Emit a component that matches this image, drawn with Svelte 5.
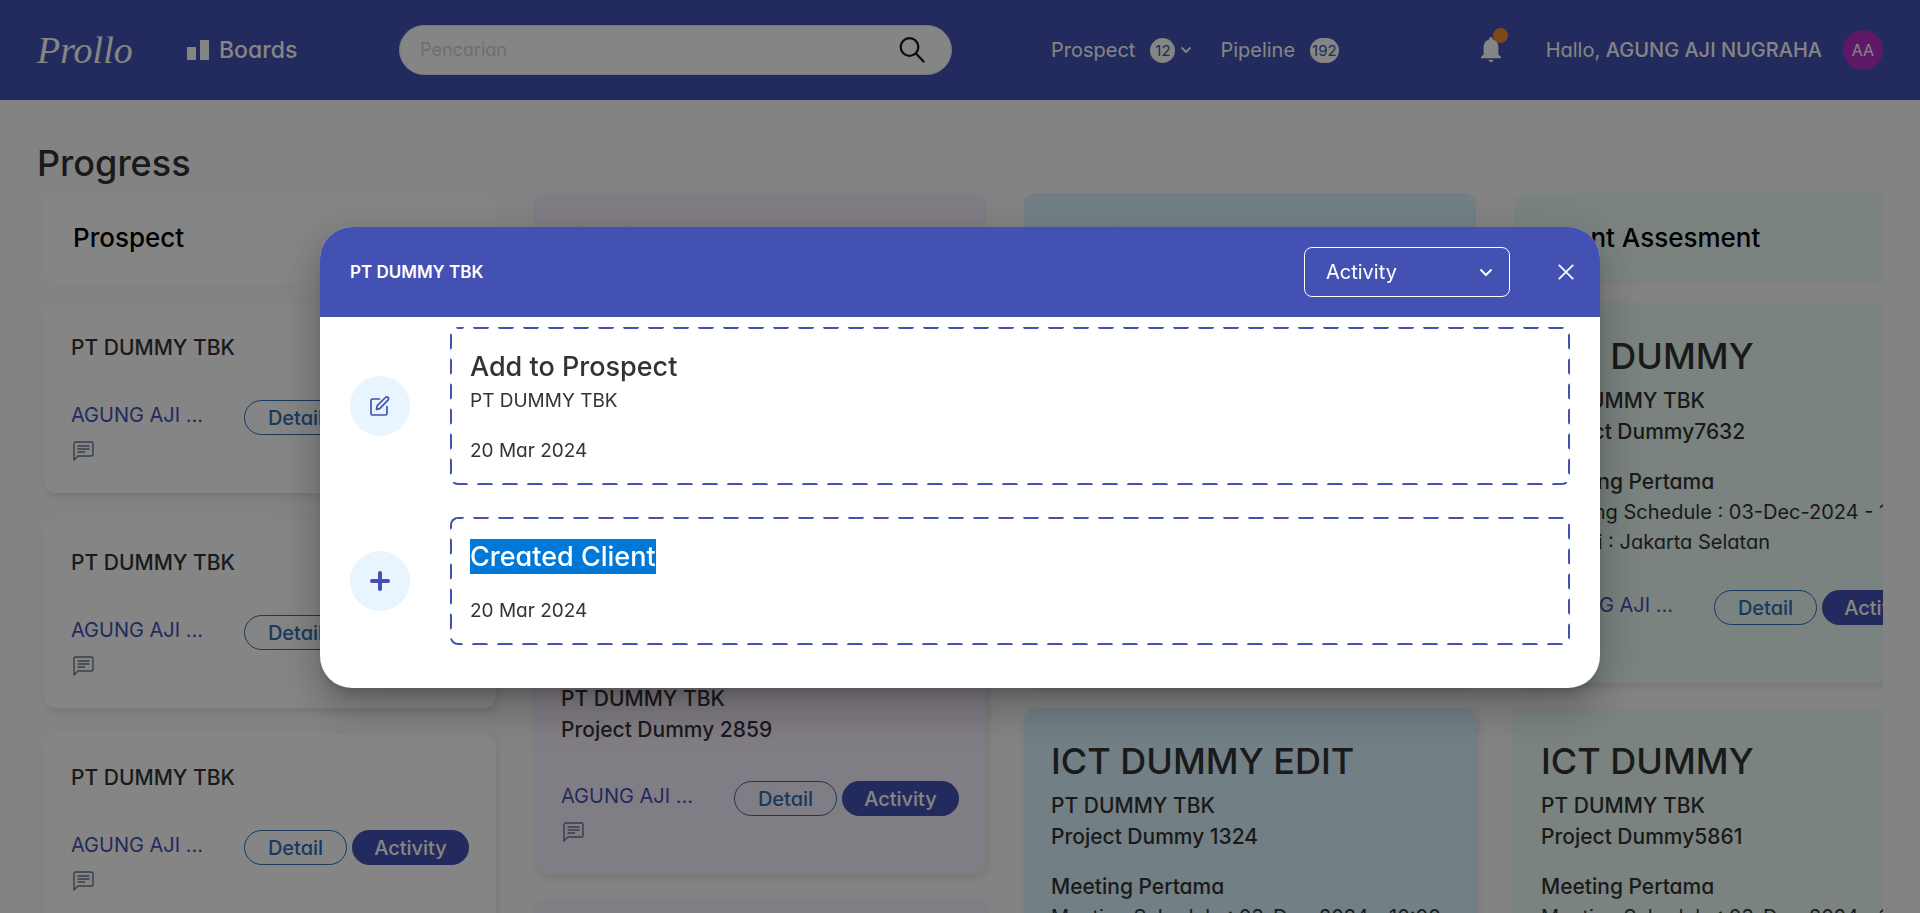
<script>
  const client = 'PT DUMMY TBK';
  const owner = 'AGUNG AJI NUGRAHA';
  const meeting = { name: 'Meeting Pertama', schedule: '03-Dec-2024 - 10:00', place: 'Jakarta Selatan' };

  const columns = [
    { name: 'Prospect', tone: 'plain', cards: [{}, {}, {}] },
    {
      name: 'Pipeline',
      tone: 'violet',
      cards: [
        { title: 'ICT DUMMY', project: 'Project Dummy 2859' },
        { title: 'ICT DUMMY', project: 'Project Dummy 2859' },
        { title: 'ICT DUMMY', project: 'Project Dummy 2859' }
      ]
    },
    {
      name: 'Meeting',
      tone: 'blue',
      cards: [
        { title: 'ICT DUMMY', project: 'Project Dummy 1324', meeting },
        { title: 'ICT DUMMY EDIT', project: 'Project Dummy 1324', meeting }
      ]
    },
    {
      name: 'Client Assesment',
      tone: 'green',
      cards: [
        { title: 'ICT DUMMY', project: 'Project Dummy7632', meeting },
        { title: 'ICT DUMMY', project: 'Project Dummy5861', meeting }
      ]
    }
  ];

  const activities = [
    { title: 'Add to Prospect', detail: client, date: '20 Mar 2024', icon: 'edit', selected: false },
    { title: 'Created Client', detail: '', date: '20 Mar 2024', icon: 'plus', selected: true }
  ];
</script>

<div class="page">
  <header class="topbar">
    <a class="logo" href="#home">Prollo</a>
    <a class="boards" href="#boards">
      <svg width="22" height="20" viewBox="0 0 22 20" aria-hidden="true">
        <rect x="0" y="7" width="9" height="13" rx="1" fill="currentColor" />
        <rect x="13" y="0" width="9" height="20" rx="1" fill="currentColor" />
      </svg>
      Boards
    </a>
    <form class="search">
      <input type="search" placeholder="Pencarian" aria-label="Pencarian" />
      <button type="button" aria-label="Cari">
        <svg width="26" height="26" viewBox="0 0 26 26" fill="none" stroke="#111820" stroke-width="2.3" stroke-linecap="round" aria-hidden="true">
          <circle cx="10.500" cy="10" r="8.800" />
          <path d="M17 16.500 24.500 24.500" />
        </svg>
      </button>
    </form>
    <nav>
      <a class="prospects" href="#prospect">
        Prospect <span class="count">12</span>
        <svg width="12" height="8" viewBox="0 0 12 8" fill="none" stroke="currentColor" stroke-width="1.800" aria-hidden="true"><path d="M1.500 1.500l4.500 4.500 4.500-4.500" /></svg>
      </a>
      <a href="#pipeline">Pipeline <span class="count">192</span></a>
    </nav>
    <div class="account">
      <button class="bell" type="button" aria-label="Notifikasi">
        <svg width="20" height="26" viewBox="0 0 20 26" fill="currentColor" aria-hidden="true">
          <path d="M10 0c-1.100 0-1.800.8-1.800 1.800v.8C4.800 3.400 2.600 6.300 2.600 10v7.500L0 20v1.200h20V20l-2.600-2.500V10c0-3.700-2.200-6.600-5.600-7.400v-.8C11.800.8 11.100 0 10 0zM7.500 22.800a2.500 2.300 0 0 0 5 0z" />
        </svg>
        <i></i>
      </button>
      <span class="hello">Hallo, <b>{owner}</b></span>
      <span class="avatar">AA</span>
    </div>
  </header>

  <main>
    <h1>Progress</h1>
    <div class="board">
      {#each columns as column}
        <section class={column.tone}>
          <h2>{column.name}</h2>
          {#each column.cards as card}
            <article>
              {#if card.title}<h3>{card.title}</h3>{/if}
              <h4>{client}</h4>
              {#if card.project}<p class="project">{card.project}</p>{/if}
              {#if card.meeting}
                <div class="meeting">
                  <p class="strong">{card.meeting.name}</p>
                  <p>Meeting Schedule : {card.meeting.schedule}</p>
                  <p>Lokasi : {card.meeting.place}</p>
                </div>
              {/if}
              <div class="actions">
                <div>
                  <span class="owner">AGUNG AJI …</span>
                  <svg class="note" width="21" height="20" viewBox="0 0 21 20" fill="none" stroke="#68788f" stroke-width="1.4" stroke-linejoin="round" aria-hidden="true">
                    <path d="M1 19V2.500A1.500 1.500 0 0 1 2.500 1H18.500A1.500 1.500 0 0 1 20 2.500V13.500A1.500 1.500 0 0 1 18.500 15H5zM4.500 5h12M4.500 8h12M4.500 11h7.500" />
                  </svg>
                </div>
                <button class="detail" type="button">Detail</button>
                <button class="activity" type="button">Activity</button>
              </div>
            </article>
          {/each}
        </section>
      {/each}
    </div>
  </main>
</div>

<div class="overlay">
  <div class="dialog" role="dialog" aria-modal="true" aria-labelledby="dialog-title">
    <div class="dialog-head">
      <h2 id="dialog-title">{client}</h2>
      <div class="picker">
        <select aria-label="Tampilan">
          <option>Activity</option>
          <option>Detail</option>
        </select>
        <svg width="14" height="10" viewBox="0 0 14 10" fill="none" stroke="currentColor" stroke-width="2" aria-hidden="true"><path d="M1.500 1.500l5.500 5.500 5.500-5.500" /></svg>
      </div>
      <button class="close" type="button" aria-label="Tutup">
        <svg width="16" height="16" viewBox="0 0 16 16" fill="none" stroke="currentColor" stroke-width="1.700" aria-hidden="true"><path d="M.8.8l14.400 14.400M15.200.8L.8 15.200" /></svg>
      </button>
    </div>
    <ul>
      {#each activities as item}
        <li>
          <span class="badge">
            {#if item.icon === 'edit'}
              <svg width="20" height="20" viewBox="0 0 20 20" fill="none" stroke="currentColor" stroke-width="1.700" stroke-linejoin="round" stroke-linecap="round" aria-hidden="true">
                <path d="M9.500 3H2.500A1.500 1.500 0 0 0 1 4.500V17.500A1.500 1.500 0 0 0 2.500 19H15.500A1.500 1.500 0 0 0 17 17.500V10.500" />
                <path d="M6.500 13.500l.6-3.600 8.300-8.400a1.700 1.700 0 0 1 2.600 0 1.700 1.700 0 0 1 0 2.600l-8.300 8.500z" />
              </svg>
            {:else}
              <svg width="20" height="20" viewBox="0 0 20 20" fill="none" stroke="currentColor" stroke-width="4" stroke-linecap="round" aria-hidden="true"><path d="M10 2v16M2 10h16" /></svg>
            {/if}
          </span>
          <div class="entry">
            <svg class="frame" width="100%" height="100%" aria-hidden="true">
              <rect width="100%" height="100%" rx="8" fill="none" stroke="#4351b3" stroke-width="4" stroke-dasharray="12 13" stroke-dashoffset="8" stroke-linecap="round" />
            </svg>
            <h3><span class:selected={item.selected}>{item.title}</span></h3>
            {#if item.detail}<p>{item.detail}</p>{/if}
            <p class="date">{item.date}</p>
          </div>
        </li>
      {/each}
    </ul>
  </div>
</div>

<style>
  :global(body) {
    margin: 0;
    overflow: hidden;
    background: #fcfcfc;
  }
  :global(*) {
    box-sizing: border-box;
  }
  .page,
  .overlay {
    font-family: Inter, 'Open Sans', sans-serif;
    font-feature-settings: 'cv11';
    font-size: 18px;
    line-height: 30px;
    color: #333;
  }
  .page {
    height: 100vh;
    overflow: hidden;
  }
  h1, h2, h3, h4, p, ul {
    margin: 0;
    padding: 0;
    font-weight: 500;
  }
  a {
    color: inherit;
    text-decoration: none;
  }
  button, input, select {
    font: inherit;
    font-feature-settings: inherit;
    color: inherit;
    border: 0;
    padding: 0;
    background: none;
  }
  svg {
    display: block;
    flex: none;
  }
  .topbar {
    display: flex;
    align-items: center;
    height: 100px;
    padding: 0 37px;
    background: #4351b3;
    color: #fff;
  }
  .logo {
    width: 150px;
    font: italic 38px 'Liberation Serif', serif;
  }
  .boards {
    display: flex;
    align-items: center;
    gap: 10px;
    width: 212px;
    font-size: 23px;
    font-weight: 500;
  }
  .search {
    display: flex;
    align-items: center;
    flex: 0 1 553px;
    height: 50px;
    padding: 0 26px 0 20px;
    border: 1px solid #e0e2ea;
    border-radius: 25px;
    background: #fff;
  }
  .search input {
    flex: 1;
    min-width: 0;
    outline: 0;
  }
  .search input::placeholder {
    color: #ced4da;
  }
  nav {
    display: flex;
    gap: 28px;
    margin-left: 99px;
    font-size: 20px;
  }
  nav a {
    display: flex;
    align-items: center;
    gap: 15px;
  }
  .prospects svg {
    margin-left: -10px;
  }
  .count {
    display: grid;
    place-items: center;
    min-width: 25px;
    height: 25px;
    padding: 0 2px;
    border-radius: 13px;
    background: #fff;
    color: #4351b3;
    font-size: 15px;
    line-height: 25px;
  }
  .account {
    display: flex;
    align-items: center;
    margin-left: auto;
    font-size: 20px;
    white-space: nowrap;
  }
  .bell {
    position: relative;
    margin-right: 45px;
  }
  .bell i {
    position: absolute;
    top: -9px;
    left: 12px;
    width: 15px;
    height: 15px;
    border-radius: 50%;
    background: #f08c36;
  }
  .hello b {
    font-weight: 500;
  }
  .avatar {
    display: grid;
    place-items: center;
    width: 40px;
    height: 40px;
    margin-left: 21px;
    border-radius: 50%;
    background: #b32fc6;
    font-size: 16px;
  }
  main {
    padding: 38px 37px 0;
  }
  h1 {
    height: 55px;
    font-size: 36px;
    line-height: 50px;
  }
  .board {
    display: flex;
    gap: 38px;
    padding-left: 7px;
    overflow: hidden;
    height: calc(100vh - 193px);
  }
  section {
    display: flex;
    flex-direction: column;
    flex: 0 0 452px;
    --tint: #fff;
  }
  .violet { --tint: #f8efff; }
  .blue { --tint: #daf4ff; }
  .green { --tint: #eafcf5; }
  section h2 {
    padding: 30px 29px;
    margin-bottom: 20px;
    border-radius: 12px;
    background: var(--tint);
    color: #000;
    font-size: 26px;
  }
  article {
    padding: 28px 27px 58px 27px;
    margin-bottom: 25px;
    border-radius: 12px;
    background: var(--tint);
    box-shadow: 2px 4px 8px rgba(0, 0, 0, 0.1);
    white-space: nowrap;
  }
  article h3 {
    margin-bottom: 3px;
    font-size: 36px;
    line-height: 50px;
  }
  article h4 {
    font-size: 21px;
    line-height: 33px;
  }
  .project {
    font-size: 21px;
  }
  .meeting {
    padding-top: 20px;
    font-size: 20px;
    margin-bottom: -3px;
  }
  .meeting p {
    font-weight: 400;
  }
  .meeting .strong {
    font-size: 21px;
    font-weight: 500;
  }
  .actions {
    display: flex;
    gap: 5px;
    height: 35px;
    margin-top: 36px;
  }
  .actions div {
    flex: 1;
  }
  .owner {
    display: block;
    color: #4351b3;
    font-size: 20px;
  }
  .note {
    margin: 11px 0 0 2px;
  }
  .actions button {
    border-radius: 18px;
    font-size: 20px;
    font-weight: 500;
  }
  .detail {
    width: 103px;
    border: 1px solid #2c6eb5;
    color: #2c6eb5;
  }
  .activity {
    width: 117px;
    background: #4351b3;
    color: #fff;
  }
  .overlay {
    position: fixed;
    inset: 0;
    display: grid;
    place-items: center;
    padding-top: 2px;
    background: rgba(0, 0, 0, 0.48);
  }
  .dialog {
    width: 1280px;
    max-width: calc(100% - 64px);
    border-radius: 32px;
    overflow: hidden;
    background: #fff;
    box-shadow: 0 11px 15px -7px rgba(0, 0, 0, 0.2), 0 24px 38px 3px rgba(0, 0, 0, 0.14), 0 9px 46px 8px rgba(0, 0, 0, 0.12);
  }
  .dialog-head {
    display: flex;
    align-items: center;
    height: 90px;
    padding: 0 26px 0 30px;
    background: #4351b3;
    color: #fff;
  }
  .dialog-head h2 {
    flex: 1;
    font-size: 17px;
    font-weight: 600;
  }
  .picker {
    position: relative;
    width: 206px;
    color: #fff;
  }
  .picker select {
    width: 100%;
    height: 50px;
    padding: 0 21px;
    border: 1px solid #fff;
    border-radius: 8px;
    appearance: none;
    font-size: 20px;
  }
  .picker svg {
    position: absolute;
    top: 21px;
    right: 17px;
    pointer-events: none;
  }
  .close {
    margin-left: 48px;
  }
  ul {
    display: grid;
    gap: 32px;
    padding: 10px 30px 43px;
    list-style: none;
  }
  li {
    display: flex;
    align-items: center;
    gap: 40px;
  }
  .badge {
    display: grid;
    place-items: center;
    width: 60px;
    height: 60px;
    border-radius: 50%;
    background: #e8f5ff;
    color: #4351b3;
  }
  .entry {
    position: relative;
    flex: 1;
    padding: 20px 20px 19px;
  }
  .frame {
    position: absolute;
    inset: 0;
    border-radius: 8px;
    overflow: hidden;
  }
  .entry h3 {
    font-size: 27px;
    line-height: 39px;
  }
  .entry p {
    font-size: 19px;
    font-weight: 400;
  }
  .entry .date {
    margin-top: 20px;
  }
  .selected {
    display: inline-block;
    line-height: 35px;
    background: #0078d7;
    color: #fff;
  }
</style>
